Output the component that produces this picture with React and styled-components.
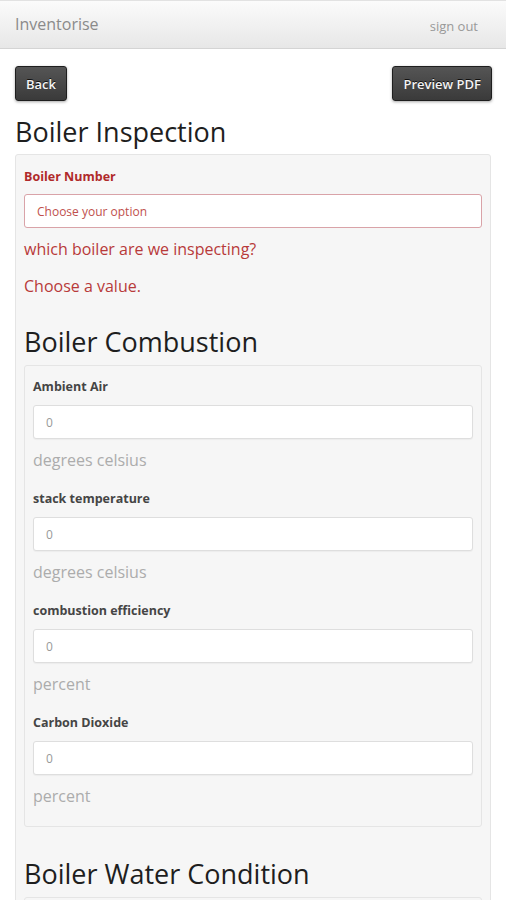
import React from "react";
import styled, { createGlobalStyle } from "styled-components";

const Global = createGlobalStyle`
  html, body { margin: 0; padding: 0; background: #fff; }
  body { font-family: "Open Sans", "Liberation Sans", sans-serif; }
  * { box-sizing: border-box; }
`;

const Header = styled.header`
  height: 49px;
  display: flex;
  align-items: center;
  justify-content: space-between;
  padding: 0 28px 0 15px;
  background: linear-gradient(#fbfbfb, #e7e7e7);
  border-bottom: 1px solid #d4d4d4;
  border-top: 1px solid #e2e2e2;
`;

const Brand = styled.div`
  font-size: 16px;
  color: #8a8a8a;
  margin-top: -1px;
`;

const SignOut = styled.div`
  font-size: 13px;
  color: #999;
  margin-top: 3px;
`;

const Main = styled.main`
  padding: 17px 14px 0 15px;
`;

const Toolbar = styled.div`
  display: flex;
  justify-content: space-between;
`;

const DarkButton = styled.button`
  height: 35px;
  padding: 0 ${(p) => p.$pad || 10}px;
  font-family: "Open Sans", "Liberation Sans", sans-serif;
  font-size: 13px;
  font-weight: 600;
  color: #f4f4f4;
  text-shadow: 0 -1px 0 #111;
  background: linear-gradient(#555, #3a3a3a);
  border: 1px solid #1e1e1e;
  border-radius: 3px;
  box-shadow: 0 1px 3px rgba(0, 0, 0, 0.35);
`;

const PageTitle = styled.h1`
  margin: 14px 0 5px;
  font-size: 27px;
  line-height: 34px;
  font-weight: 400;
  color: #1e1e1e;
`;

const Panel = styled.section`
  background: #f6f6f6;
  border: 1px solid #e5e5e5;
  border-radius: 3px;
  padding: ${(p) => p.$pad || "12px 8px 0 8px"};
  margin-right: ${(p) => p.$mr || 0}px;
  min-height: ${(p) => p.$minH || 0}px;
`;

const Label = styled.div`
  font-size: 12.5px;
  line-height: 18px;
  font-weight: 700;
  color: ${(p) => (p.$error ? "#b02a2a" : "#454545")};
  margin-bottom: ${(p) => (p.$error ? 8 : 9)}px;
`;

const Field = styled.div`
  height: 34px;
  display: flex;
  align-items: center;
  padding: 0 12px;
  background: #fff;
  border: 1px solid ${(p) => (p.$error ? "#d9a3a8" : "#dedede")};
  border-radius: 3px;
  font-size: 12px;
  color: ${(p) => (p.$error ? "#c0504d" : "#999")};
  ${(p) => (p.$error ? "" : "box-shadow: 0 1px 1px rgba(0,0,0,0.04);")}
`;

const Helper = styled.div`
  font-size: 16px;
  line-height: 22px;
  color: ${(p) => (p.$error ? "#b83a3a" : "#acacac")};
  margin-top: ${(p) => p.$mt || 10}px;
  margin-bottom: ${(p) => p.$mb || 0}px;
`;

const SectionTitle = styled.h2`
  margin: ${(p) => p.$m || "28px 0 6px"};
  font-size: 27px;
  line-height: 34px;
  font-weight: 400;
  color: #1e1e1e;
`;

const FieldGroup = styled.div`
  margin-bottom: 19px;
`;

const fields = [
  { label: "Ambient Air", unit: "degrees celsius" },
  { label: "stack temperature", unit: "degrees celsius" },
  { label: "combustion efficiency", unit: "percent" },
  { label: "Carbon Dioxide", unit: "percent" },
];

export default function App() {
  return (
    <>
      <Global />
      <Header>
        <Brand>Inventorise</Brand>
        <SignOut>sign out</SignOut>
      </Header>
      <Main>
        <Toolbar>
          <DarkButton $pad={10}>Back</DarkButton>
          <DarkButton $pad={10}>Preview PDF</DarkButton>
        </Toolbar>
        <PageTitle>Boiler Inspection</PageTitle>
        <Panel $pad="13px 8px 0 8px" $mr={1}>
          <Label $error>Boiler Number</Label>
          <Field $error>Choose your option</Field>
          <Helper $error $mt={10}>which boiler are we inspecting?</Helper>
          <Helper $error $mt={15}>Choose a value.</Helper>
          <SectionTitle>Boiler Combustion</SectionTitle>
          <Panel $pad="12px 8px 0 8px">
            {fields.map((f) => (
              <FieldGroup key={f.label}>
                <Label>{f.label}</Label>
                <Field>0</Field>
                <Helper>{f.unit}</Helper>
              </FieldGroup>
            ))}
          </Panel>
          <SectionTitle $m="30px 0 6px">Boiler Water Condition</SectionTitle>
          <Panel $pad="0" $minH={60} />
        </Panel>
      </Main>
    </>
  );
}
